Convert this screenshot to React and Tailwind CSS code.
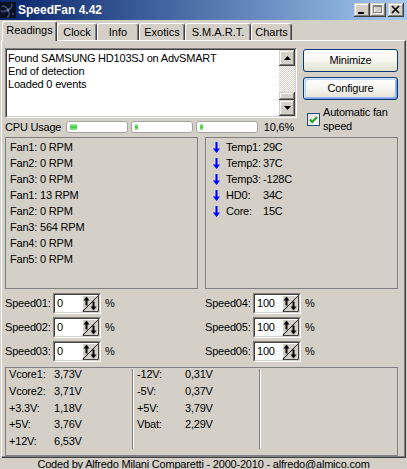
import React from 'react';

// classic win2k raised bevel
const raised =
  'shadow-[inset_-1px_-1px_#404040,inset_1px_1px_#d4d0c8,inset_-2px_-2px_#808080,inset_2px_2px_#ffffff]';

const tabs = [
  { label: 'Readings', w: 'w-[55px]', active: true },
  { label: 'Clock', w: 'w-[40px]' },
  { label: 'Info', w: 'w-[42px]' },
  { label: 'Exotics', w: 'w-[46px]' },
  { label: 'S.M.A.R.T.', w: 'w-[66px]' },
  { label: 'Charts', w: 'w-[41px]' },
];

const fans = [
  'Fan1: 0 RPM',
  'Fan2: 0 RPM',
  'Fan3: 0 RPM',
  'Fan1: 13 RPM',
  'Fan2: 0 RPM',
  'Fan3: 564 RPM',
  'Fan4: 0 RPM',
  'Fan5: 0 RPM',
];

const temps = [
  ['Temp1:', '29C'],
  ['Temp2:', '37C'],
  ['Temp3:', '-128C'],
  ['HD0:', '34C'],
  ['Core:', '15C'],
];

const volts1 = [
  ['Vcore1:', '3,73V'],
  ['Vcore2:', '3,71V'],
  ['+3.3V:', '1,18V'],
  ['+5V:', '3,76V'],
  ['+12V:', '6,53V'],
];

const volts2 = [
  ['-12V:', '0,31V'],
  ['-5V:', '0,37V'],
  ['+5V:', '3,79V'],
  ['Vbat:', '2,29V'],
];

const TitleIcon = () => (
  <svg width="16" height="16" viewBox="0 0 16 16">
    <rect width="16" height="16" fill="#0b1022" />
    <path d="M8 8C6 4 3 3 2 5M8 8c4-2 5-5 3-6M8 8c2 4 1 7-1 7M8 8C4 10 1 10 1 8" stroke="#3d4d78" strokeWidth="1.4" fill="none" />
    <circle cx="8" cy="8" r="1.5" fill="#6a7aa4" />
    <rect x="12" y="11" width="2" height="2" fill="#2e3c66" />
  </svg>
);

const WinBtn = ({ children }) => (
  <div className={`w-[16px] h-[14px] bg-[#d4d0c8] ${raised}`}>
    <svg width="16" height="14" viewBox="0 0 16 14">{children}</svg>
  </div>
);

const Arrow = () => (
  <svg width="7" height="11" viewBox="0 0 7 11" className="mt-[3px] shrink-0">
    <path d="M2.5 0h2v6.5H7L3.5 11 0 6.5h2.5z" fill="#0000ff" />
  </svg>
);

const SpinEdit = ({ value }) => (
  <div className="w-[48px] h-[21px] flex border border-t-[#808080] border-l-[#808080] border-b-white border-r-white">
    <div className="flex-1 flex border border-t-[#404040] border-l-[#404040] border-b-[#d4d0c8] border-r-[#d4d0c8] bg-white">
      <span className="flex-1 pl-[2px] leading-[17px]">{value}</span>
      <svg width="17" height="17" viewBox="0 0 17 17">
        <rect width="17" height="17" fill="#d4d0c8" />
        <path d="M.5 17V.5H17" stroke="#ffffff" fill="none" />
        <path d="M.5 16.5h16V0" stroke="#404040" fill="none" />
        <path d="M1 16L16 1" stroke="#000" />
        <path d="M4.5 1.5L1.5 5.5h2v5h2v-5h2z" fill="#000" />
        <path d="M11.5 15.5l3-4h-2v-5h-2v5h-2z" fill="#000" />
      </svg>
    </div>
  </div>
);

const CpuBar = ({ fill }) => (
  <div className="w-[62px] h-[12px] rounded-[3px] border border-[#a4a4a4] bg-white flex items-center pl-[3px]">
    <div className={`${fill} h-[6px] bg-linear-to-b from-[#aef2ae] via-[#2ccb2c] to-[#9ee89e]`} />
  </div>
);

const XpButton = ({ children, focused, className }) => (
  <div
    className={`${className} h-[23px] rounded-[3px] border border-[#003c74] bg-linear-to-b from-white via-[#f6f5f0] to-[#e3e0d2] flex items-center justify-center ${
      focused
        ? 'shadow-[inset_1px_1px_0_#cee7ff,inset_-1px_-1px_0_#7d98ee,inset_2px_2px_0_#bcd4f6,inset_-2px_-2px_0_#9ab8f4]'
        : ''
    }`}
  >
    {children}
  </div>
);

const SpeedRow = ({ label, value }) => (
  <div className="flex items-center h-[21px]">
    <span className="w-[48px] shrink-0">{label}</span>
    <SpinEdit value={value} />
    <span className="ml-[4px]">%</span>
  </div>
);

const Divider = () => (
  <div className="w-[2px] h-[80px] border-l border-l-[#808080] border-r border-r-white" />
);

export default function App() {
  return (
    <div className="w-[407px] h-[469px] overflow-hidden bg-[#d4d0c8] font-['Liberation_Sans',Arial,sans-serif] text-[11px] tracking-[-0.2px] text-black">
      {/* Title bar */}
      <div className="h-[20px] flex items-center bg-linear-to-r from-[#0a246a] to-[#a6caf0]">
        <TitleIcon />
        <span className="ml-[2px] text-[12px] font-bold text-white leading-none tracking-normal">SpeedFan 4.42</span>
        <div className="ml-auto mr-[3px] flex items-center">
          <WinBtn>
            <rect x="4" y="9" width="6" height="2" fill="#000" />
          </WinBtn>
          <WinBtn>
            <rect x="4.5" y="3.5" width="8" height="7" stroke="#ffffff" fill="none" />
            <rect x="3.5" y="2.5" width="8" height="7" stroke="#808080" fill="none" />
            <rect x="3" y="2" width="9" height="2" fill="#808080" />
          </WinBtn>
          <div className="ml-[2px]">
            <WinBtn>
              <path d="M4 3l7 7M11 3l-7 7" stroke="#000" strokeWidth="1.6" />
            </WinBtn>
          </div>
        </div>
      </div>

      {/* Tabs */}
      <div className="mt-[1px] h-[19px] flex items-end pl-[2px] relative z-10">
        {tabs.map((t) =>
          t.active ? (
            <div
              key={t.label}
              className={`${t.w} h-[20px] -mb-[1px] bg-[#d4d0c8] border-t border-l border-white border-r border-r-[#404040] shadow-[inset_-1px_0_#808080] rounded-t-[3px] flex justify-center pt-[2px] leading-[13px] tracking-normal`}
            >
              {t.label}
            </div>
          ) : (
            <div
              key={t.label}
              className={`${t.w} h-[17px] border-t border-l border-white border-r border-r-[#404040] shadow-[inset_-1px_0_#808080] rounded-t-[3px] flex justify-center pt-[2px] leading-[13px] tracking-normal`}
            >
              {t.label}
            </div>
          )
        )}
      </div>

      {/* Page */}
      <div className="ml-[1px] w-[405px] h-[418px] border-t border-l border-white border-r border-r-[#404040] border-b border-b-[#404040] shadow-[inset_-1px_-1px_#808080] pl-[3px] pt-[7px]">
        <div className="flex">
          <div className="w-[292px]">
            {/* Log listbox */}
            <div className="h-[70px] flex border border-t-[#808080] border-l-[#808080] border-b-white border-r-white">
              <div className="flex-1 flex border border-t-[#404040] border-l-[#404040] border-b-[#d4d0c8] border-r-[#d4d0c8]">
                <div className="flex-1 bg-white pl-[1px] pt-[2px] leading-[13px]">
                  <div>Found SAMSUNG HD103SJ on AdvSMART</div>
                  <div>End of detection</div>
                  <div>Loaded 0 events</div>
                </div>
                <div className="w-[16px] flex flex-col">
                  <div className={`h-[16px] bg-[#d4d0c8] ${raised} flex items-center justify-center`}>
                    <svg width="7" height="4" viewBox="0 0 7 4">
                      <path d="M3.5 0L7 4H0z" fill="#000" />
                    </svg>
                  </div>
                  <div className="flex-1 bg-[image:conic-gradient(#ffffff_25%,#d4d0c8_0_50%,#ffffff_0_75%,#d4d0c8_0)] bg-[length:2px_2px]" />
                  <div className={`h-[8px] bg-[#d4d0c8] ${raised}`} />
                  <div className={`h-[16px] bg-[#d4d0c8] ${raised} flex items-center justify-center`}>
                    <svg width="7" height="4" viewBox="0 0 7 4">
                      <path d="M0 0h7L3.5 4z" fill="#000" />
                    </svg>
                  </div>
                </div>
              </div>
            </div>

            {/* CPU usage */}
            <div className="mt-[3px] h-[12px] flex items-center">
              <span className="w-[61px] leading-[12px]">CPU Usage</span>
              <div className="flex gap-[3px]">
                <CpuBar fill="w-[7px]" />
                <CpuBar fill="w-[3px]" />
                <CpuBar fill="w-[3px]" />
              </div>
              <span className="ml-auto pr-[3px] leading-[12px]">10,6%</span>
            </div>
          </div>

          <div className="ml-[6px] w-[95px]">
            <XpButton className="mt-[1px]">Minimize</XpButton>
            <XpButton className="mt-[5px]" focused>
              Configure
            </XpButton>
            <div className="mt-[5px] flex items-center">
              <div className="ml-[4px] w-[13px] h-[13px] border border-[#1c5180] bg-linear-to-br from-[#dcdcd7] to-white flex items-center justify-center">
                <svg width="9" height="9" viewBox="0 0 9 9">
                  <path d="M1 4.5l2.3 2.5L8 2" stroke="#21a121" strokeWidth="2" fill="none" />
                </svg>
              </div>
              <span className="ml-[3px] w-[75px] leading-[14px]">Automatic fan speed</span>
            </div>
          </div>
        </div>

        {/* Fans / temps */}
        <div className="mt-[4px] flex gap-[7px]">
          <div className="w-[193px] h-[152px] border border-[#808080] pl-[4px] pt-[1px] leading-[16px]">
            {fans.map((f, i) => (
              <div key={i}>{f}</div>
            ))}
          </div>
          <div className="w-[193px] h-[152px] border border-[#808080] pl-[7px] pt-[1px] leading-[16px]">
            {temps.map(([l, v]) => (
              <div key={l} className="flex h-[16px]">
                <Arrow />
                <span className="ml-[6px] w-[37px] shrink-0 whitespace-nowrap">{l}</span>
                <span className="whitespace-nowrap">{v}</span>
              </div>
            ))}
          </div>
        </div>

        {/* Speeds */}
        <div className="mt-[4px] flex">
          <div className="w-[200px] flex flex-col gap-[3px]">
            <SpeedRow label="Speed01:" value="0" />
            <SpeedRow label="Speed02:" value="0" />
            <SpeedRow label="Speed03:" value="0" />
          </div>
          <div className="flex flex-col gap-[3px]">
            <SpeedRow label="Speed04:" value="100" />
            <SpeedRow label="Speed05:" value="100" />
            <SpeedRow label="Speed06:" value="100" />
          </div>
        </div>

        {/* Voltages */}
        <div className="mt-[5px] w-[393px] h-[89px] border border-[#808080] flex">
          <div className="w-[126px] pl-[3px] -mt-[2px] leading-[16.75px]">
            {volts1.map(([l, v]) => (
              <div key={l} className="flex">
                <span className="w-[45px] shrink-0">{l}</span>
                <span>{v}</span>
              </div>
            ))}
          </div>
          <div className="mt-[1px]">
            <Divider />
          </div>
          <div className="w-[125px] pl-[3px] -mt-[2px] leading-[16.75px]">
            {volts2.map(([l, v]) => (
              <div key={l} className="flex">
                <span className="w-[48px] shrink-0">{l}</span>
                <span>{v}</span>
              </div>
            ))}
          </div>
          <div className="mt-[1px]">
            <Divider />
          </div>
        </div>
      </div>

      {/* Footer */}
      <div className="text-center leading-[13px] whitespace-nowrap">
        Coded by Alfredo Milani Comparetti - 2000-2010 - alfredo@almico.com
      </div>
    </div>
  );
}
